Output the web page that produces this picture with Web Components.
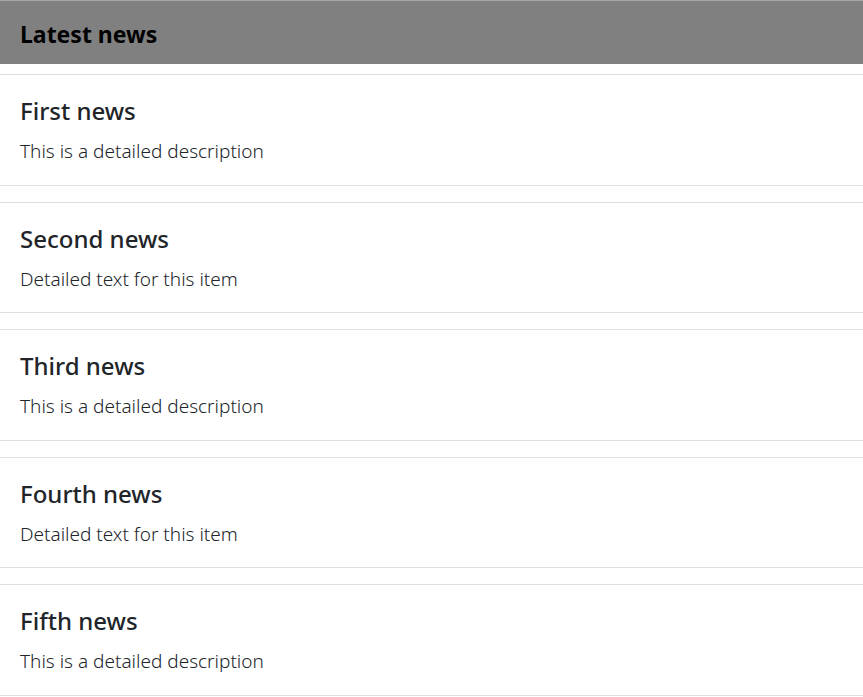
<!DOCTYPE html>
<html lang="en">
<head>
<meta charset="utf-8">
<title>Latest news</title>
<style>
body { margin: 0; background: #fff; color: #212529; font-family: "Noto Sans", "Open Sans", sans-serif; }
</style>
</head>
<body>
<news-list>
  <span slot="title">Latest news</span>
  <news-item><span slot="title">First news</span>This is a detailed description</news-item>
  <news-item><span slot="title">Second news</span>Detailed text for this item</news-item>
  <news-item><span slot="title">Third news</span>This is a detailed description</news-item>
  <news-item><span slot="title">Fourth news</span>Detailed text for this item</news-item>
  <news-item><span slot="title">Fifth news</span>This is a detailed description</news-item>
</news-list>
<script>
class NewsList extends HTMLElement {
  constructor() {
    super();
    this.attachShadow({ mode: "open" }).innerHTML = `
      <style>
        :host { display: block; }
        header { background: #808080; border-top: 1px solid #a6a6a6; padding: 17px 20px 14px; color: #000; }
        h1 { margin: 0; font-size: 23px; line-height: 32px; font-weight: 700; }
        section { display: flex; flex-direction: column; gap: 16px; padding-top: 10px; }
      </style>
      <header><h1><slot name="title"></slot></h1></header>
      <section><slot></slot></section>`;
  }
}
class NewsItem extends HTMLElement {
  constructor() {
    super();
    this.attachShadow({ mode: "open" }).innerHTML = `
      <style>
        :host { display: block; padding: 20px 20px 19px; border: solid #dfdfdf; border-width: 1px 0; }
        h2 { margin: 0 0 10px; font-size: 24px; line-height: 32px; font-weight: 500; }
        p { margin: 0; font-size: 19px; line-height: 1.5; font-weight: 350; }
      </style>
      <article><h2><slot name="title"></slot></h2><p><slot></slot></p></article>`;
  }
}
customElements.define("news-list", NewsList);
customElements.define("news-item", NewsItem);
</script>
</body>
</html>
